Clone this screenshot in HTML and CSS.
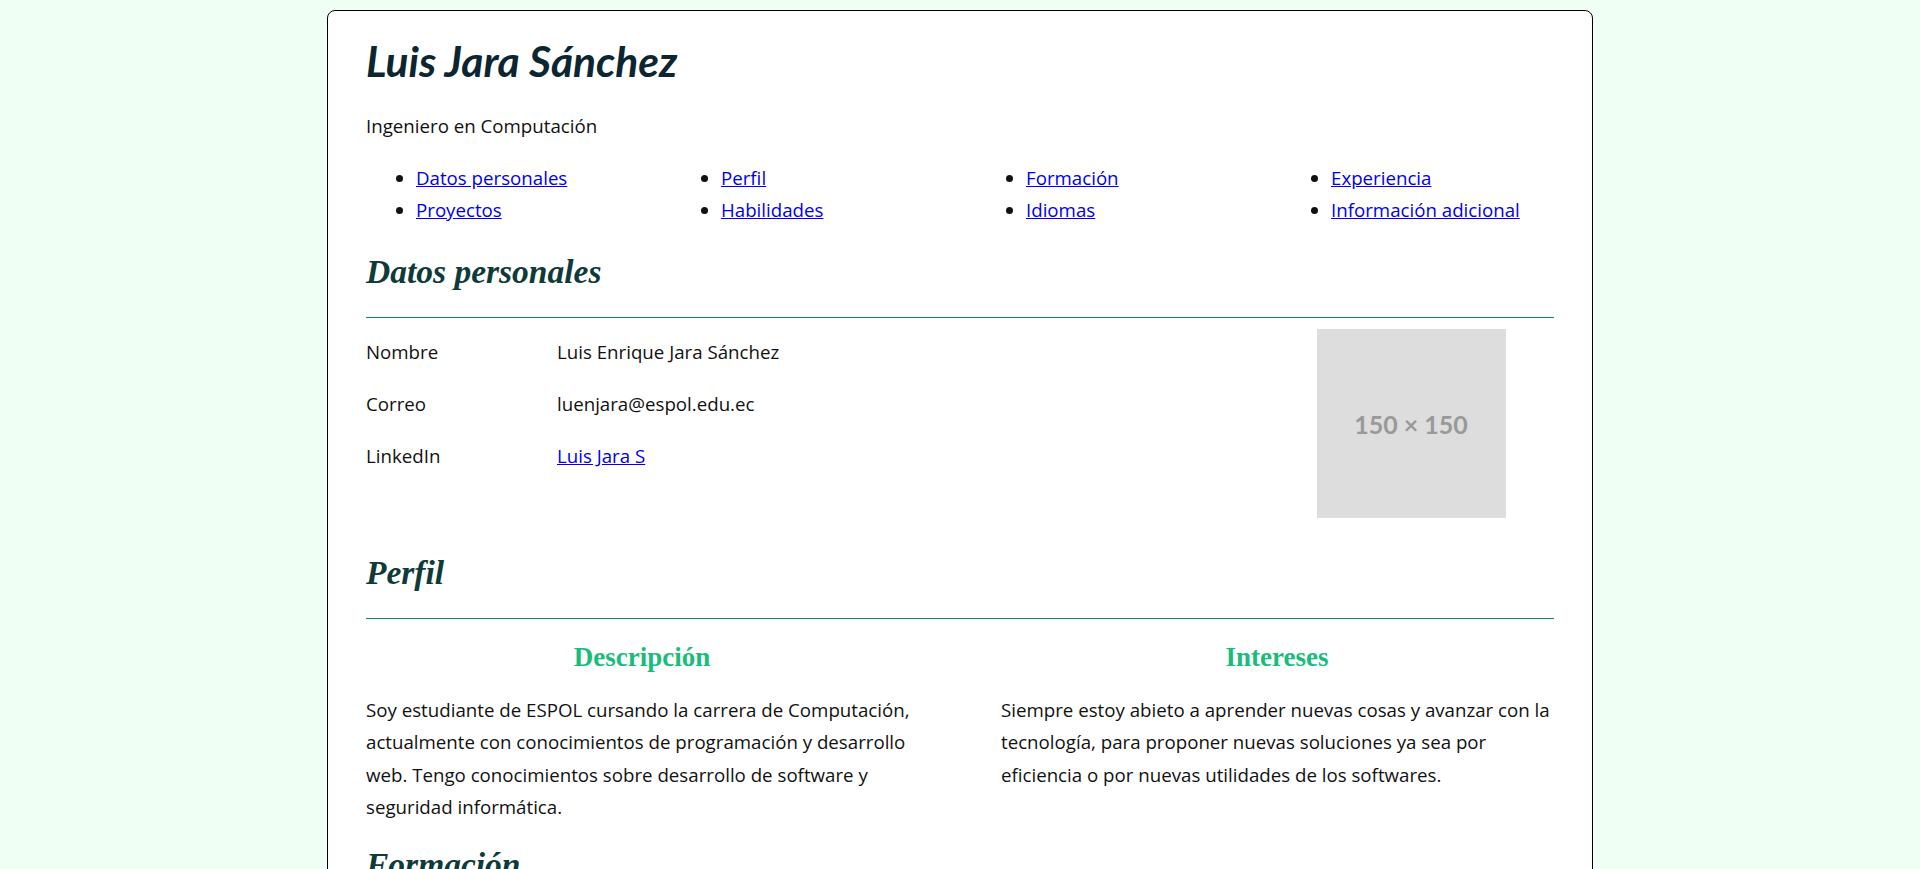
FILE: index.html
```html
<!DOCTYPE html>
<html lang="es">
<head>
<meta charset="utf-8">
<title>Luis Jara Sánchez</title>
<link rel="stylesheet" href="styles.css">
</head>
<body>
<main class="card">
  <header class="head">
    <h1 class="name">Luis Jara Sánchez</h1>
    <p class="role">Ingeniero en Computación</p>
    <ul class="nav">
      <li><a href="#datos">Datos personales</a></li>
      <li><a href="#perfil">Perfil</a></li>
      <li><a href="#formacion">Formación</a></li>
      <li><a href="#experiencia">Experiencia</a></li>
      <li><a href="#proyectos">Proyectos</a></li>
      <li><a href="#habilidades">Habilidades</a></li>
      <li><a href="#idiomas">Idiomas</a></li>
      <li><a href="#info">Información adicional</a></li>
    </ul>
  </header>

  <section id="datos" class="section">
    <h2 class="section-title">Datos personales</h2>
    <hr class="rule">
    <div class="datos">
      <dl class="info">
        <div class="info-row"><dt>Nombre</dt><dd>Luis Enrique Jara Sánchez</dd></div>
        <div class="info-row"><dt>Correo</dt><dd>luenjara@espol.edu.ec</dd></div>
        <div class="info-row"><dt>LinkedIn</dt><dd><a href="#">Luis Jara S</a></dd></div>
      </dl>
      <div class="photo-col">
        <div class="photo">150 × 150</div>
      </div>
    </div>
  </section>

  <section id="perfil" class="section">
    <h2 class="section-title">Perfil</h2>
    <hr class="rule">
    <div class="cols">
      <div class="col">
        <h3 class="sub">Descripción</h3>
        <p class="text">Soy estudiante de ESPOL cursando la carrera de Computación, actualmente con conocimientos de programación y desarrollo web. Tengo conocimientos sobre desarrollo de software y seguridad informática.</p>
      </div>
      <div class="col">
        <h3 class="sub">Intereses</h3>
        <p class="text">Siempre estoy abieto a aprender nuevas cosas y avanzar con la tecnología, para proponer nuevas soluciones ya sea por eficiencia o por nuevas utilidades de los softwares.</p>
      </div>
    </div>
  </section>

  <section id="formacion" class="section">
    <h2 class="section-title">Formación</h2>
    <hr class="rule">
  </section>
</main>
</body>
</html>
```

FILE: styles.css
```css
html, body {
  margin: 0;
  padding: 0;
}

body {
  background: #f0fff4;
  font-family: "Open Sans", "DejaVu Sans", sans-serif;
  font-size: 18.7px;
  color: #111;
}

.card {
  width: 1188px;
  margin: 10px auto 0;
  padding: 0 38px 40px;
  background: #fff;
  border: 1px solid #000;
  border-radius: 8px;
}

.name {
  margin: 0;
  padding-top: 26px;
  font-family: Lato, "Open Sans", sans-serif;
  font-style: italic;
  font-weight: 700;
  font-size: 42.5px;
  line-height: 48px;
  color: #0b2630;
}

.role {
  margin: 28px 0 0;
  line-height: 26px;
}

.nav {
  list-style: disc;
  margin: 26px 0 0;
  padding: 0 0 0 50px;
  display: grid;
  grid-template-columns: repeat(4, 223px);
  column-gap: 82px;
  row-gap: 6px;
}

.nav li {
  line-height: 26px;
}

a {
  color: #0000ee;
}

.section-title {
  margin: 0;
  font-family: "Liberation Serif", "Times New Roman", serif;
  font-style: italic;
  font-weight: 700;
  font-size: 33.5px;
  line-height: 40px;
  color: #0e3b3a;
}

#datos .section-title {
  margin-top: 29px;
}

.rule {
  margin: 0;
  border: 0;
  border-top: 1px solid #0f8a5f;
}

#datos .rule {
  margin-top: 25px;
}

.datos {
  display: flex;
  justify-content: space-between;
  margin-top: 11px;
}

.info {
  margin: 0;
  padding-top: 10px;
}

.info-row {
  display: flex;
  height: 52px;
  line-height: 26px;
}

.info dt {
  width: 191px;
}

.info dd {
  margin: 0;
}

.photo-col {
  width: 286px;
  display: flex;
  justify-content: center;
}

.photo {
  width: 189px;
  height: 189px;
  background: #dddddd;
  color: #999999;
  font-family: Lato, "Open Sans", sans-serif;
  font-weight: 700;
  font-size: 25px;
  display: flex;
  align-items: center;
  justify-content: center;
}

#perfil .section-title {
  margin-top: 35px;
}

#perfil .rule {
  margin-top: 25px;
}

.cols {
  display: grid;
  grid-template-columns: 552px 552px;
  column-gap: 83px;
}

.sub {
  margin: 23px 0 0;
  text-align: center;
  font-family: "Liberation Serif", "Times New Roman", serif;
  font-weight: 700;
  font-size: 27px;
  line-height: 30px;
  color: #1abc7c;
}

.text {
  margin: 22px 0 0;
  line-height: 32.3px;
}

#formacion .section-title {
  margin-top: 22px;
}

#formacion .rule {
  margin-top: 30px;
}
```
